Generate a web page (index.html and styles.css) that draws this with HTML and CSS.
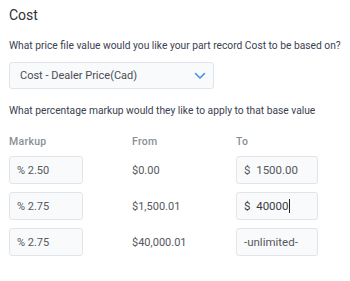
FILE: index.html
```html
<!DOCTYPE html>
<html>
<head>
<meta charset="utf-8">
<link rel="stylesheet" href="styles.css">
</head>
<body>
<div class="panel">
  <h2 class="title">Cost</h2>
  <p class="question q1">What price file value would you like your part record Cost to be based on?</p>
  <div class="select">
    <span>Cost - Dealer Price(Cad)</span>
    <svg class="chev" width="12" height="8" viewBox="0 0 12 8"><path d="M1.5 1.5 L6 6 L10.5 1.5" fill="none" stroke="#4a8fe7" stroke-width="1.6" stroke-linecap="round" stroke-linejoin="round"/></svg>
  </div>
  <p class="question q2">What percentage markup would they like to apply to that base value</p>
  <div class="grid">
    <div class="head">Markup</div><div class="head">From</div><div class="head">To</div>
    <div class="field pct">% 2.50</div><div class="from">$0.00</div><div class="field to">$&nbsp; 1500.00</div>
    <div class="field pct">% 2.75</div><div class="from">$1,500.01</div><div class="field to dark">$&nbsp; 40000<span class="caret"></span></div>
    <div class="field pct">% 2.75</div><div class="from">$40,000.01</div><div class="field to">-unlimited-</div>
  </div>
</div>
</body>
</html>
```

FILE: styles.css
```css
* { box-sizing: border-box; }
body {
  margin: 0;
  background: #fff;
  font-family: Roboto, "Liberation Sans", sans-serif;
  width: 350px;
  height: 281px;
  overflow: hidden;
}
.panel { padding: 7px 0 0 9px; }
.title {
  margin: 0;
  font-size: 14px;
  font-weight: 400;
  color: #2f3133;
  line-height: 17px;
}
.question {
  margin: 0;
  font-size: 10.25px;
  color: #3a4150;
  line-height: 14px;
}
.q1 { margin-top: 15px; }
.q2 { margin-top: 15px; }
.select {
  margin-top: 9px;
  width: 205px;
  height: 27px;
  border: 1px solid #e1e4e9;
  border-radius: 3px;
  background: #f9fafc;
  display: flex;
  align-items: center;
  justify-content: space-between;
  padding: 0 7px 0 10px;
  font-size: 11px;
  color: #4a4d52;
}
.chev { margin-top: 1px; }
.grid {
  margin-top: 17px;
  display: grid;
  grid-template-columns: 123px 104px 82px;
  row-gap: 8px;
  align-items: center;
}
.head {
  font-size: 10.5px;
  color: #8a8e94;
  font-weight: 500;
  letter-spacing: 0.3px;
  line-height: 13px;
}
.field {
  height: 28px;
  border: 1px solid #e1e4e9;
  border-radius: 3px;
  background: #f9fafc;
  display: flex;
  align-items: center;
  font-size: 11px;
  color: #55585d;
  padding-left: 7px;
}
.pct { width: 74px; }
.to { width: 82px; padding-left: 7px; font-size: 11.5px; }
.dark { color: #3a3d42; }
.from {
  font-size: 11px;
  color: #55585d;
}
.caret {
  display: inline-block;
  width: 1px;
  height: 14px;
  background: #222;
  margin-left: 1px;
}
```
